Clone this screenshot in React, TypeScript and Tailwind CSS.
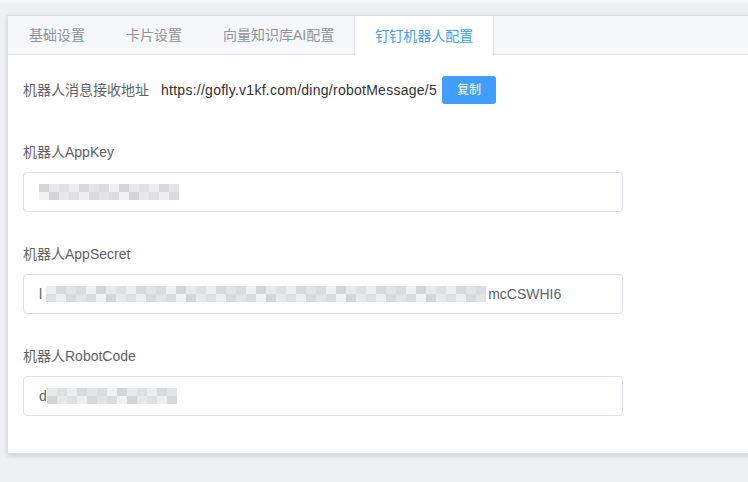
import React from "react";

const tabs = ["基础设置", "卡片设置", "向量知识库AI配置", "钉钉机器人配置"];

// blurred (mosaic) value blocks, two rows of little tiles
const tileColors = [
  "bg-[#e3e4e7]",
  "bg-[#d3d5da]",
  "bg-[#eceef0]",
  "bg-[#dadce0]",
  "bg-[#e8e9eb]",
  "bg-[#d7d9dd]",
  "bg-[#f0f1f2]",
  "bg-[#dfe0e3]",
];

const Mosaic: React.FC<{ count: number; seed: number }> = ({ count, seed }) => (
  <div className="flex flex-col">
    {[0, 1].map((row) => (
      <div key={row} className="flex">
        {Array.from({ length: count }).map((_, i) => (
          <div
            key={i}
            className={`h-[8px] w-[10px] ${tileColors[(i * 3 + row * 5 + seed) % tileColors.length]}`}
          />
        ))}
      </div>
    ))}
  </div>
);

const Field: React.FC<{ label: string; children: React.ReactNode }> = ({ label, children }) => (
  <div className="mb-[22px]">
    <div className="h-10 leading-10 text-[14px] text-[#606266]">{label}</div>
    <div className="flex h-10 w-[600px] items-center rounded-[4px] border border-[#dcdfe6] bg-white px-[15px] text-[14px] text-[#606266]">
      {children}
    </div>
  </div>
);

export default function App() {
  return (
    <div
      className="h-[482px] w-[748px] overflow-hidden bg-[#eef0f4] text-[14px]"
      style={{ fontFamily: '"Liberation Sans", "Noto Sans CJK SC", sans-serif' }}
    >
      <div className="h-[6px] bg-gradient-to-b from-[#f7f7f9] to-[#eceef2]" />
      <div className="pl-[7px] pt-[9px]">
        <div className="w-[760px] border border-[#dcdfe6] bg-white shadow-[0_2px_4px_0_rgba(0,0,0,0.12),0_0_6px_0_rgba(0,0,0,0.04)]">
          <div className="flex h-[39px] border-b border-[#e4e7ed] bg-[#f5f7fa]">
            {tabs.map((t, i) =>
              i === 3 ? (
                <div
                  key={t}
                  className="-mb-px -ml-px flex h-[40px] items-center border-x border-[#dcdfe6] bg-white px-5 text-[#409eff]"
                >
                  {t}
                </div>
              ) : (
                <div
                  key={t}
                  className={`flex h-[39px] items-center border-x border-transparent px-5 text-[#909399] ${i > 0 ? "-ml-px" : ""}`}
                >
                  {t}
                </div>
              )
            )}
          </div>

          <div className="px-[15px] pt-[15px] pb-[15px]">
            <div className="mb-[22px] flex h-10 items-center">
              <span className="pr-3 text-[#606266]">机器人消息接收地址</span>
              <span className="tracking-[0.26px] text-[#303133]">https://gofly.v1kf.com/ding/robotMessage/5</span>
              <button className="ml-[5px] h-[28px] rounded-[3px] bg-[#409eff] px-[15px] text-[12px] text-white">
                复制
              </button>
            </div>

            <Field label="机器人AppKey">
              <Mosaic count={14} seed={1} />
            </Field>

            <Field label="机器人AppSecret">
              <span>l</span>
              <span className="ml-[4px]">
                <Mosaic count={44} seed={2} />
              </span>
              <span className="ml-[2px]">mcCSWHI6</span>
            </Field>

            <Field label="机器人RobotCode">
              <span>d</span>
              <Mosaic count={13} seed={4} />
            </Field>
          </div>
        </div>
      </div>
    </div>
  );
}
